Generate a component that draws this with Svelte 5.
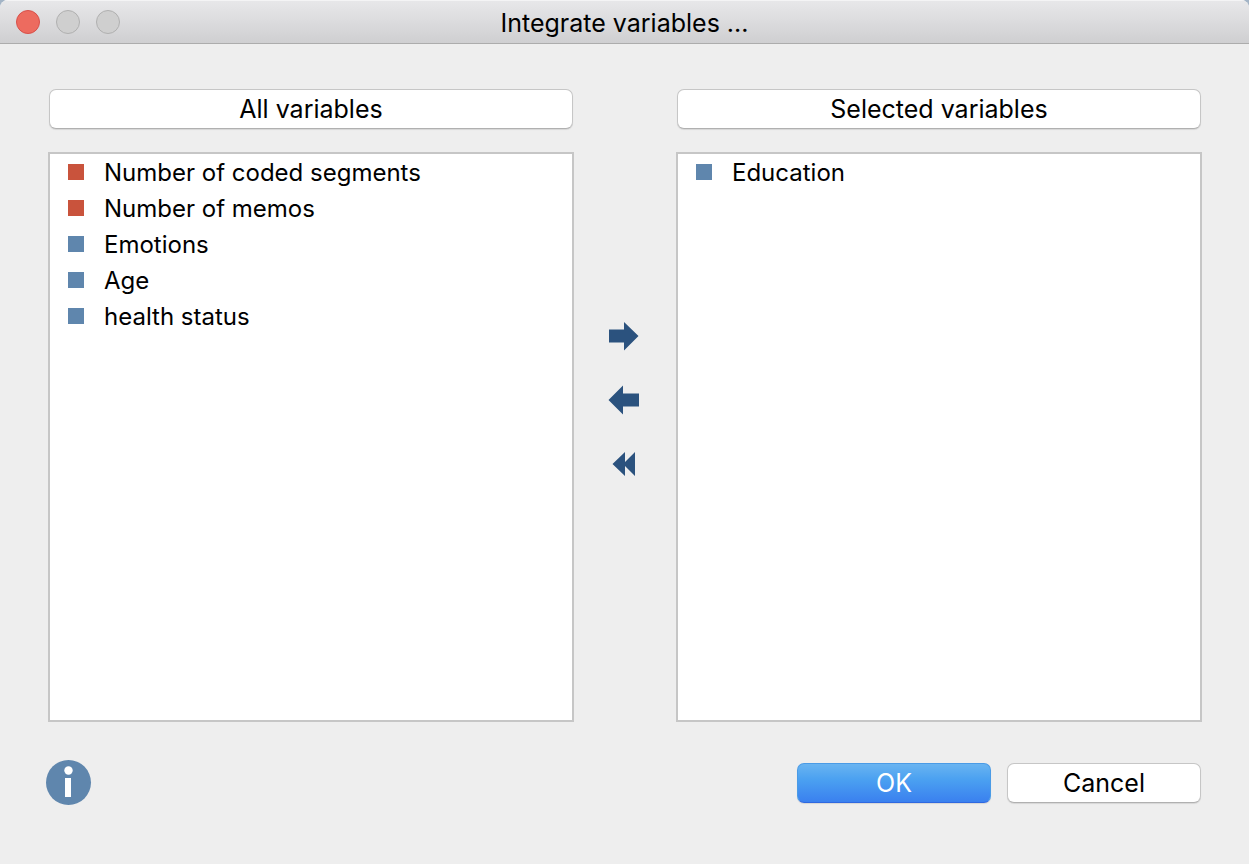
<script lang="ts">
    type Variable = { name: string; kind: 'system' | 'user' };

    const initial: Variable[] = [
        { name: "Number of coded segments", kind: "system" },
        { name: "Number of memos", kind: "system" },
        { name: "Emotions", kind: "user" },
        { name: "Age", kind: "user" },
        { name: "health status", kind: "user" }
    ];

    let available: Variable[] = initial;
    let selected: Variable[] = [{ name: "Education", kind: "user" }];
    let active: string | null = null;

    function add() {
        const item = available.find((v) => v.name === active);
        if (!item) return;
        available = available.filter((v) => v !== item);
        selected = [...selected, item];
    }

    function remove() {
        const item = selected.find((v) => v.name === active);
        if (!item) return;
        selected = selected.filter((v) => v !== item);
        available = [...available, item];
    }

    function removeAll() {
        available = [...available, ...selected];
        selected = [];
    }
</script>

<div class="window">
    <header class="titlebar">
        <div class="lights">
            <button class="light close" aria-label="Close"></button>
            <button class="light" aria-label="Minimize" disabled></button>
            <button class="light" aria-label="Zoom" disabled></button>
        </div>
        <h1>Integrate variables ...</h1>
    </header>

    <main class="content">
        <section class="column">
            <button class="btn heading">All variables</button>
            <ul class="list">
                {#each available as v}
                    <li>
                        <button class="item" class:active={active === v.name} on:click={() => (active = v.name)}>
                            <span class="mark {v.kind}"></span>
                            <span class="label">{v.name}</span>
                        </button>
                    </li>
                {/each}
            </ul>
        </section>

        <div class="arrows">
            <button class="arrow" aria-label="Add variable" on:click={add}>
                <svg width="32" height="32" viewBox="0 0 32 32">
                    <path d="M1 9.5H16V2L30.5 16L16 30.5V22.5H1Z" />
                </svg>
            </button>
            <button class="arrow" aria-label="Remove variable" on:click={remove}>
                <svg width="32" height="32" viewBox="0 0 32 32">
                    <path d="M31 9.5H15V1.5L0.5 16L15 30.5V22.5H31Z" />
                </svg>
            </button>
            <button class="arrow" aria-label="Remove all variables" on:click={removeAll}>
                <svg width="32" height="32" viewBox="0 0 32 32">
                    <path d="M4.5 16L17 4V14L27 4V28L17 18V28Z" />
                </svg>
            </button>
        </div>

        <section class="column">
            <button class="btn heading">Selected variables</button>
            <ul class="list">
                {#each selected as v}
                    <li>
                        <button class="item" class:active={active === v.name} on:click={() => (active = v.name)}>
                            <span class="mark {v.kind}"></span>
                            <span class="label">{v.name}</span>
                        </button>
                    </li>
                {/each}
            </ul>
        </section>
    </main>

    <footer class="footer">
        <button class="info" aria-label="Help">
            <svg width="46" height="46" viewBox="0 0 46 46">
                <circle cx="22.5" cy="22.5" r="22.5" fill="#5f86ad" />
                <circle cx="22.5" cy="10.5" r="4.2" fill="#fff" />
                <rect x="19" y="18" width="6" height="19" fill="#fff" />
            </svg>
        </button>
        <div class="actions">
            <button class="btn primary">OK</button>
            <button class="btn">Cancel</button>
        </div>
    </footer>
</div>

<style>
    :global(body) {
        background: #a3b4c6;
    }

    .window {
        box-sizing: border-box;
        min-height: 100vh;
        display: flex;
        flex-direction: column;
        background: #eeeeee;
        border-radius: 8px 8px 0 0;
        overflow: hidden;
        font-family: Inter, "Liberation Sans", sans-serif;
        color: #000;
    }

    button {
        font: inherit;
        color: inherit;
        padding: 0;
        margin: 0;
        border: none;
        background: none;
    }

    .titlebar {
        box-sizing: border-box;
        height: 44px;
        display: grid;
        grid-template-columns: 1fr auto 1fr;
        align-items: center;
        padding: 0 16px;
        background: linear-gradient(#e8e8ea, #cfcfd1);
        border-bottom: 1px solid #acacac;
        box-shadow: inset 0 1px #f4f4f5;
    }

    .lights {
        display: flex;
        gap: 16px;
    }

    .light {
        box-sizing: border-box;
        width: 24px;
        height: 24px;
        border-radius: 50%;
        border: 1px solid #b0b0b0;
        background: #cfcfcf;
    }

    .close {
        border-color: #d8504a;
        background: #ed6b5f;
    }

    h1 {
        margin: 0;
        padding-top: 2px;
        font-size: 25px;
        font-weight: 400;
        line-height: 32px;
    }

    .content {
        flex: 1;
        display: grid;
        grid-template-columns: 1fr 102px 1fr;
        padding: 45px 47px 0 48px;
    }

    .column {
        display: flex;
        flex-direction: column;
        gap: 23px;
    }

    .btn {
        width: 194px;
        height: 40px;
        border: 1px solid #c6c6c6;
        border-bottom-color: #b0b0b0;
        border-radius: 7px;
        background: #fff;
        box-shadow: 0 1px 1px rgba(0, 0, 0, 0.1);
        font-size: 25px;
        line-height: 32px;
    }

    .heading {
        width: auto;
        margin: 0 1px;
    }

    .primary {
        color: #fff;
        border-color: #4a9be6;
        border-bottom-color: #2f68e0;
        background: linear-gradient(#69b4f1, #4ba1f1 40%, #3a80ef);
    }

    .list {
        flex: 1;
        margin: 0;
        padding: 0;
        list-style: none;
        border: 2px solid #c6c6c6;
        background: #fff;
    }

    .item {
        width: 100%;
        height: 36px;
        display: flex;
        align-items: center;
        gap: 20px;
        padding: 0 18px;
        font-size: 24px;
        line-height: 32px;
        text-align: left;
    }

    .item.active {
        background: #cfe0f3;
    }

    .label {
        padding-top: 2px;
    }

    .mark {
        width: 16px;
        height: 16px;
    }

    .mark.system {
        background: #c9533c;
    }

    .mark.user {
        background: #5f86ad;
    }

    .arrows {
        display: flex;
        flex-direction: column;
        align-items: center;
        justify-content: center;
        padding: 0 2px 11px 0;
    }

    .arrow {
        width: 48px;
        height: 64px;
        display: grid;
        place-items: center;
    }

    .arrow path {
        fill: #2b527e;
    }

    .footer {
        display: flex;
        align-items: center;
        justify-content: space-between;
        padding: 38px 48px 58px 46px;
    }

    .info svg {
        display: block;
    }

    .actions {
        display: flex;
        gap: 16px;
    }
</style>
